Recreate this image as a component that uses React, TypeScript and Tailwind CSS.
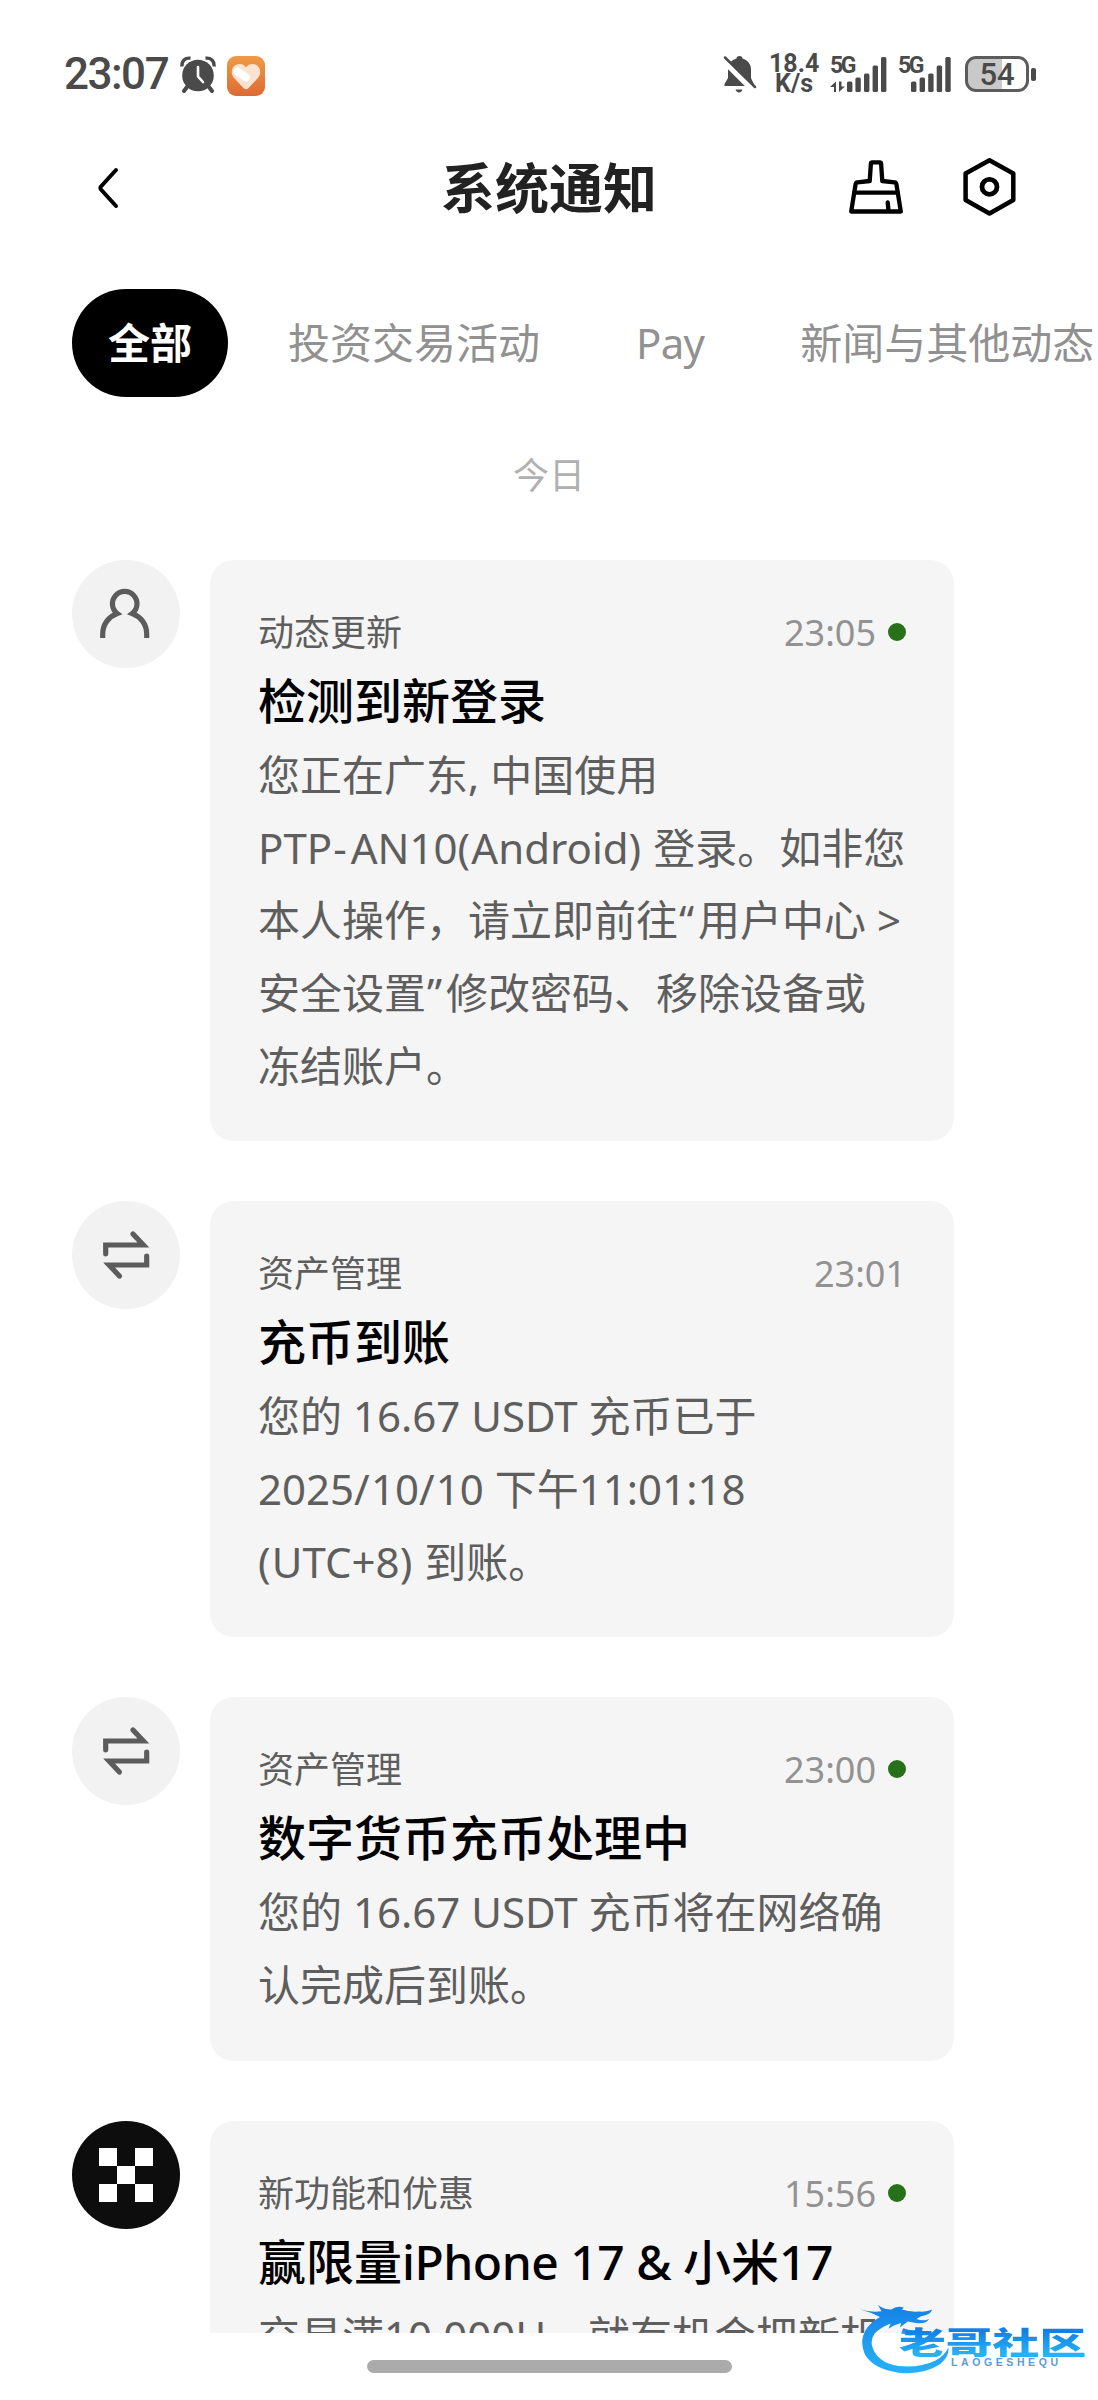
import type { ReactNode } from "react";

type Notice = {
  icon: "user" | "transfer" | "brand";
  category: string;
  time: string;
  unread: boolean;
  title: string;
  lines: string[];
};

const tabs = ["全部", "投资交易活动", "Pay", "新闻与其他动态"];

const notices: Notice[] = [
  {
    icon: "user",
    category: "动态更新",
    time: "23:05",
    unread: true,
    title: "检测到新登录",
    lines: [
      "您正在广东, 中国使用",
      "PTP-AN10(Android) 登录。如非您",
      "本人操作，请立即前往“用户中心 >",
      "安全设置”修改密码、移除设备或",
      "冻结账户。",
    ],
  },
  {
    icon: "transfer",
    category: "资产管理",
    time: "23:01",
    unread: false,
    title: "充币到账",
    lines: ["您的 16.67 USDT 充币已于", "2025/10/10 下午11:01:18", "(UTC+8) 到账。"],
  },
  {
    icon: "transfer",
    category: "资产管理",
    time: "23:00",
    unread: true,
    title: "数字货币充币处理中",
    lines: ["您的 16.67 USDT 充币将在网络确", "认完成后到账。"],
  },
  {
    icon: "brand",
    category: "新功能和优惠",
    time: "15:56",
    unread: true,
    title: "赢限量iPhone 17 & 小米17",
    lines: ["交易满10,000U，就有机会把新机"],
  },
];

const AlarmIcon = () => (
  <svg width="36" height="38" viewBox="0 0 36 38" fill="none">
    <circle cx="18" cy="20.5" r="15.8" fill="#4a4a4a" />
    <path
      d="M2 11.5C1.5 6 5 2.5 10.5 3.2M34 11.5C34.5 6 31 2.5 25.5 3.2"
      stroke="#4a4a4a"
      strokeWidth="3.4"
    />
    <path d="M7 32l-3 4M29 32l3 4" stroke="#4a4a4a" strokeWidth="4" strokeLinecap="round" />
    <path d="M18 12v9.5l5 5.500" stroke="#fff" strokeWidth="2.6" strokeLinecap="round" />
  </svg>
);

const HeartAppIcon = () => (
  <div className="flex h-10 w-[38px] items-center justify-center rounded-[9px] bg-linear-to-b from-[#f09a45] to-[#dc6a34]">
    <svg width="30" height="27" viewBox="0 0 30 27" fill="none">
      <path
        d="M15 4.5C12-.5 5 0 2 4.5C-.5 9 1 13 4 16l9 9.5q2 1.5 4 0l9-9.5c3-3 4.500-7 2-11.500C25 0 18-.5 15 4.500Z"
        fill="#fbe3cf"
      />
      <path d="M6.5 8.5l8.5 6" stroke="#fff" strokeWidth="8" strokeLinecap="round" />
    </svg>
  </div>
);

const BellOffIcon = () => (
  <svg width="34" height="38" viewBox="0 0 34 38" fill="none">
    <path
      d="M13.5 3.5q0-2.5 3-2.500t3 2.500C24.500 5 28 9 28 14v9l3 6.500v1.500H1.500v-2L5 23V14C5 9 8.500 5 13.500 3.500Z"
      fill="#4a4a4a"
    />
    <path d="M12.500 34.500h7q-1 3-3.500 3t-3.500-3Z" fill="#4a4a4a" />
    <path d="M-2 3L29 34" stroke="#fff" strokeWidth="6" />
    <path d="M2 2.500L32 32" stroke="#4a4a4a" strokeWidth="2.5" strokeLinecap="round" />
  </svg>
);

const Signal = ({ arrows = false }: { arrows?: boolean }) => (
  <div className="relative h-[37px] w-[57px]">
    <span className="absolute left-0 top-0 text-[23px] leading-[19px] font-bold tracking-[-2.5px]">
      5G
    </span>
    <svg className="absolute inset-0" width="57" height="37" viewBox="0 0 57 37" fill="#4a4a4a">
      <rect x={arrows ? 17 : 13} y="25.5" width="5.4" height="10.5" rx="1.5" />
      <rect x={arrows ? 25.4 : 21.6} y="21.5" width="5.4" height="14.5" rx="1.5" />
      <rect x={arrows ? 34 : 30.2} y="17.5" width="5.4" height="18.5" rx="1.5" />
      <rect x={arrows ? 42.6 : 38.7} y="9.5" width="5.4" height="26.5" rx="1.5" />
      <rect x={arrows ? 51 : 47.3} y="1" width="5.4" height="35" rx="1.5" />
      {arrows && <path d="M0 31l6-5.500V36H4v-5ZM9 25.500V36l6-5.500h-3.500v-5Z" />}
    </svg>
  </div>
);

const Battery = () => (
  <div className="flex items-center gap-[2px]">
    <div className="flex h-9 w-16 items-center justify-center rounded-[11px] border-[3px] border-[#5c5c5c] bg-linear-to-r from-[#c9c9c9] from-58% to-white to-58%">
      <span className="text-[31px] leading-none font-medium">54</span>
    </div>
    <div className="h-[13px] w-[5px] rounded-[2px] bg-[#4a4a4a]" />
  </div>
);

const StatusBar = () => (
  <div className="flex h-[148px] items-center pl-[64px] pr-[62px] font-['Roboto','Noto_Sans',sans-serif] text-[#4a4a4a]">
    <span className="w-[116px] text-[44px] leading-none font-medium tracking-[-1.5px]">23:07</span>
    <AlarmIcon />
    <div className="ml-[11px] mt-[4px]">
      <HeartAppIcon />
    </div>
    <div className="ml-auto flex items-center">
      <BellOffIcon />
      <div className="ml-[12px] mr-[11px] w-[50px] text-center text-[25px] leading-[20px] font-bold">
        <div>18.4</div>
        <div>K/s</div>
      </div>
      <Signal arrows />
      <div className="w-[11px]" />
      <Signal />
      <div className="w-[10px]" />
      <Battery />
    </div>
  </div>
);

const Header = () => (
  <div className="flex h-20 items-center pl-[96px] pr-[81px]">
    <svg width="24" height="42" viewBox="0 0 24 42" fill="none">
      <path
        d="M20 3L5 19.5q-1.2 1.500 0 3L20 39"
        stroke="#000"
        strokeWidth="4"
        strokeLinecap="round"
      />
    </svg>
    <h1 className="ml-[321px] text-[54px] leading-none font-bold text-[#222]">系统通知</h1>
    <svg
      className="ml-auto -mt-[2px]"
      width="54"
      height="54"
      viewBox="0 0 54 54"
      fill="none"
      stroke="#000"
      strokeWidth="4.3"
      strokeLinejoin="round"
      strokeLinecap="round"
    >
      <path d="M23.3 2.3h7.4q1.3 0 1.4 1.3l1.2 17.4l12.2 1.3q1.6.2 1.9 1.8l4.4 27.4H2.2L6.6 24.1q.3-1.6 1.9-1.8L20.7 21L21.9 3.6q.1-1.3 1.4-1.3Z" />
      <path d="M5.5 32.7h43M38.7 42.5l.8 8" />
    </svg>
    <svg
      className="ml-[60px] -mt-[2px]"
      width="54"
      height="60"
      viewBox="0 0 54 60"
      fill="none"
      stroke="#000"
      strokeWidth="4.5"
    >
      <path d="M26.5 3.2L50.3 16.5V43L26.5 56.5L2.6 43V16.5Z" strokeLinejoin="round" />
      <circle cx="26.5" cy="29.8" r="7.5" strokeWidth="4.8" />
    </svg>
  </div>
);

const Tabs = () => (
  <div className="mt-[61px] flex h-[108px] gap-6 overflow-hidden pl-[72px] text-[42px] whitespace-nowrap">
    {tabs.map((tab, i) => (
      <button
        key={tab}
        className={
          i === 0
            ? "shrink-0 rounded-full bg-black px-9 pb-[2px] font-bold text-white"
            : i === 2
              ? "shrink-0 px-9 pb-px tracking-[-0.7px] text-[#919191]"
              : "shrink-0 px-9 pb-px text-[#919191]"
        }
      >
        {tab}
      </button>
    ))}
  </div>
);

const icons: Record<Notice["icon"], ReactNode> = {
  user: (
    <path
      d="M30.700 78V74C30.700 64 37 56.500 45.200 53.500A12.300 12.300 0 1 1 60.200 53.500C68.500 56.500 74.700 64 74.700 74V78"
      stroke="#5c5c5c"
      strokeWidth="5.2"
    />
  ),
  transfer: (
    <g stroke="#5c5c5c" strokeWidth="5.2" strokeLinecap="round">
      <path d="M33.700 52.800V44H71.300L61 33" />
      <path d="M74.700 55.200V64H37.100L47.400 75" />
    </g>
  ),
  brand: (
    <path
      d="M27 27h18v18H27ZM63 27h18v18H63ZM45 45h18v18H45ZM27 63h18v18H27ZM63 63h18v18H63Z"
      fill="#fff"
    />
  ),
};

const spaced = (line: string) =>
  line.split(/([-“”()/])/).map((part, i) =>
    /^[-“”]$/.test(part) ? (
      <span key={i} className="mx-[1px] tracking-[3px]">
        {part}
      </span>
    ) : /^[()/]$/.test(part) ? (
      <span key={i} className="tracking-[1.2px]">
        {part}
      </span>
    ) : (
      part
    ),
  );

const NoticeRow = ({ notice }: { notice: Notice }) => (
  <div className="flex items-start gap-[30px]">
    <svg
      className={
        notice.icon === "brand"
          ? "size-[108px] rounded-full bg-[#0d0d0d]"
          : "size-[108px] rounded-full bg-[#f2f2f2]"
      }
      viewBox="0 0 108 108"
      fill="none"
    >
      {icons[notice.icon]}
    </svg>
    <div className="w-[744px] rounded-[24px] bg-[#f5f5f5] px-12 pt-[49px] pb-[39px]">
      <div className="flex h-12 items-center text-[36px] leading-[48px]">
        <span className="text-[#5e5e5e]">{notice.category}</span>
        <span className="ml-auto text-[#929292]">{notice.time}</span>
        {notice.unread && <span className="-mt-[2px] ml-3 size-[18px] rounded-full bg-[#28701a]" />}
      </div>
      <h2 className="mt-2 mb-[3px] text-[48px] leading-[71px] font-medium whitespace-nowrap text-black">
        {notice.title.split(/([A-Za-z0-9& ]+)/).map((part, i) => (
          <span key={i} className={i % 2 ? "tracking-[-0.5px]" : ""}>
            {part}
          </span>
        ))}
      </h2>
      <div className="text-[42px] leading-[72.67px] whitespace-nowrap text-[#5e5e5e]">
        {notice.lines.map((line) => (
          <p key={line}>{spaced(line)}</p>
        ))}
      </div>
    </div>
  </div>
);

const Watermark = () => (
  <div className="absolute left-[860px] top-[2300px] h-[77px] w-[230px]">
    <svg className="absolute left-0 top-0" width="93" height="77" viewBox="120 120 280 230">
      <defs>
        <linearGradient id="wave" x1="0" y1="0" x2="0" y2="1">
          <stop offset="0" stopColor="#1580e4" />
          <stop offset="1" stopColor="#27b2f8" />
        </linearGradient>
      </defs>
      <g fill="url(#wave)">
        <path d="M120 147Q150 157 185 153L174 134Q192 148 214 148Q232 134 252 142L246 148Q270 156 298 154Q322 156 337 148Q334 164 304 168L290 176Q312 184 328 176Q320 192 288 188L264 184L240 202L244 188L222 196L206 206L212 190Q182 202 164 220Q152 238 156 256Q170 308 236 318Q300 324 346 302Q376 286 386 262Q390 288 362 312Q310 346 236 338Q160 328 134 282Q116 238 142 202Q156 184 180 170L154 158Z" />
        <path d="M250 204Q280 216 312 204L292 218L272 226L244 220Z" />
      </g>
    </svg>
    <span className="absolute left-[39px] top-[25px] origin-left scale-x-[1.51] bg-linear-to-b from-[#1580e4] from-20% to-[#27b2f8] to-90% bg-clip-text font-['Noto_Sans_CJK_SC',sans-serif] text-[31px] leading-[32px] font-black whitespace-nowrap text-transparent">
      老哥社区
    </span>
    <span className="absolute left-[91px] top-[57px] font-['Liberation_Sans',sans-serif] text-[10.5px] leading-[11px] font-bold tracking-[3.6px] text-[#5b9bd8]">
      LAOGESHEQU
    </span>
  </div>
);

export default function App() {
  return (
    <div className="relative h-[2400px] w-[1098px] overflow-hidden bg-white font-['Noto_Sans','Noto_Sans_CJK_SC',sans-serif]">
      <StatusBar />
      <Header />
      <Tabs />
      <div className="mt-[55px] mb-[60px] text-center text-[36px] leading-[48px] text-[#b0b0b0]">
        今日
      </div>
      <div className="flex h-[1773px] flex-col gap-[60px] overflow-hidden pl-[72px]">
        {notices.map((notice) => (
          <NoticeRow key={notice.title} notice={notice} />
        ))}
      </div>
      <div className="mx-auto mt-[27px] h-[13px] w-[365px] rounded-full bg-[#ababab]" />
      <Watermark />
    </div>
  );
}
